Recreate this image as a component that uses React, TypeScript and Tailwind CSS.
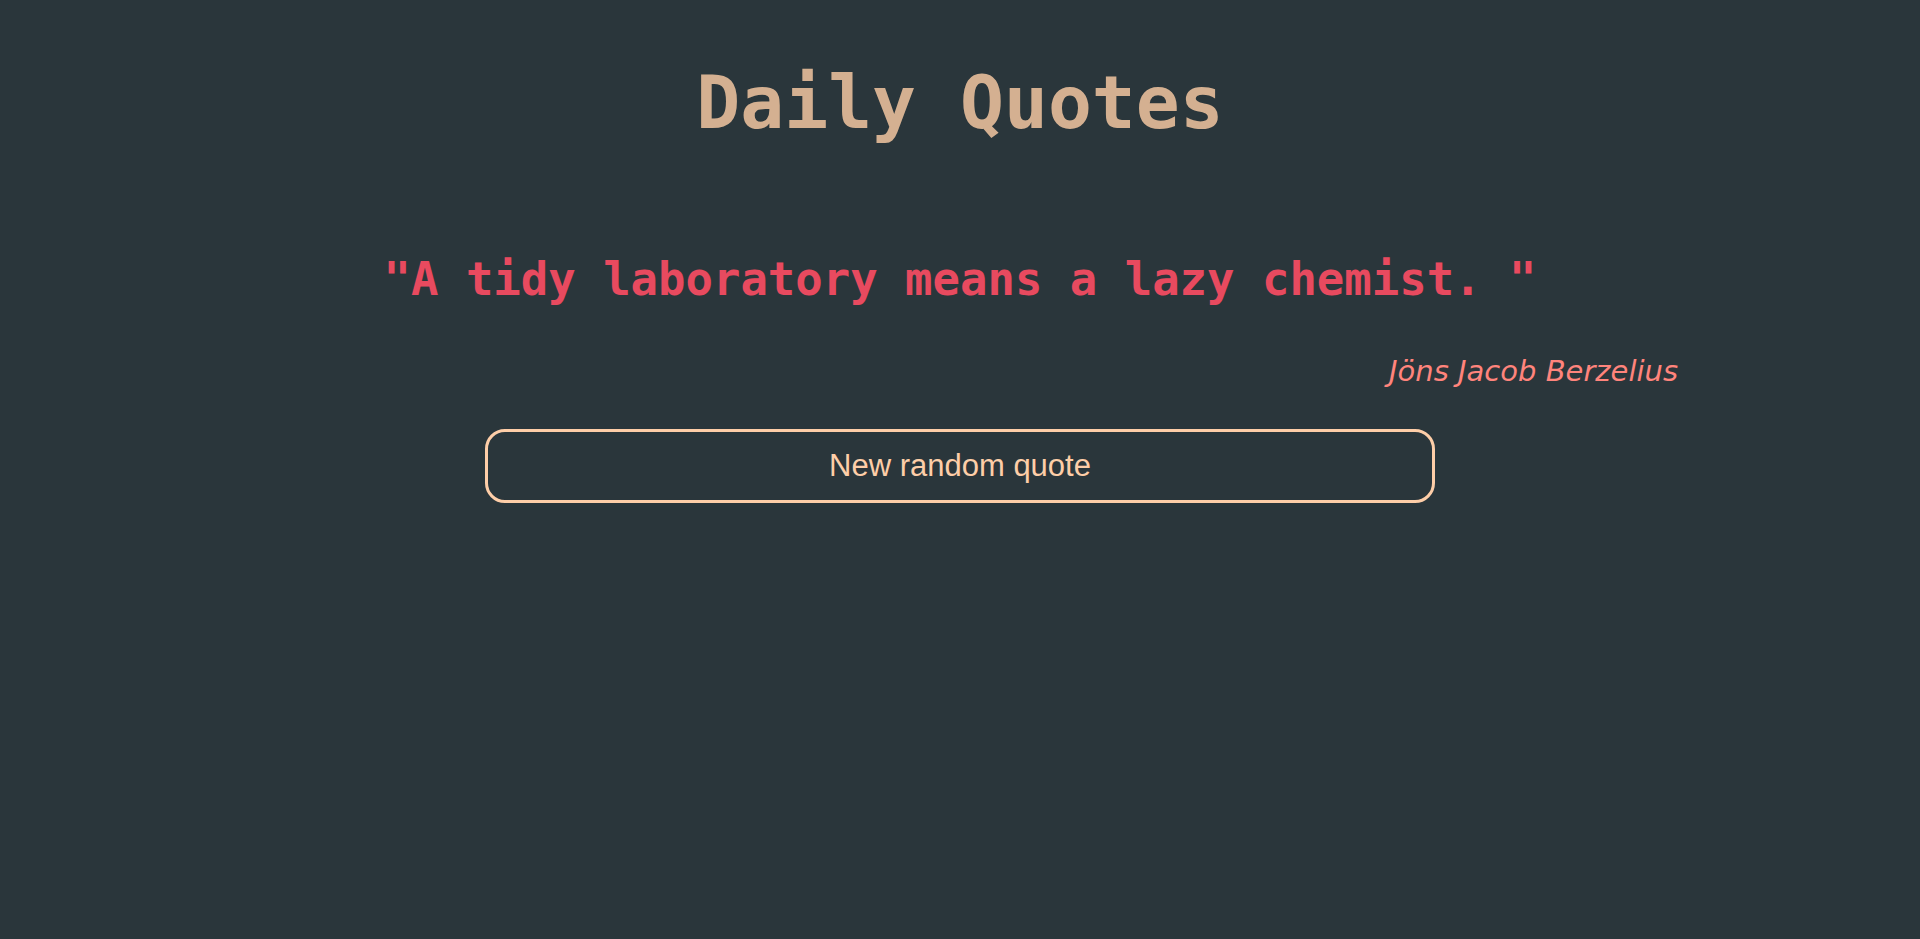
const quote = {
  text: 'A tidy laboratory means a lazy chemist. ',
  author: 'Jöns Jacob Berzelius',
};

const App = () => {
  return (
    <div className="min-h-screen w-full bg-[#2a363b] flex flex-col items-center">
      <h1 className="mt-[60px] text-[73px] leading-[85px] font-bold text-[#d4b091] font-['DejaVu_Sans_Mono',monospace]">
        Daily Quotes
      </h1>
      <div className="w-full flex flex-col">
        <p className="mt-[108px] text-center text-[45.6px] leading-[54px] font-bold text-[#e84a5f] font-['DejaVu_Sans_Mono',monospace]">
          "{quote.text}"
        </p>
        <div className="mt-[47px] flex justify-end pr-[242px]">
          <span className="text-[29px] leading-[34px] italic text-[#ff847c] font-['Comic_Sans_MS','DejaVu_Sans',sans-serif]">
            {quote.author}
          </span>
        </div>
      </div>
      <button
        type="button"
        className="mt-[41px] w-[950px] h-[74px] rounded-[20px] border-[3px] border-[#fecea8] bg-transparent text-[31px] text-[#fecea8] font-['Liberation_Sans',Arial,sans-serif] cursor-pointer"
      >
        New random quote
      </button>
    </div>
  );
};

export default App;
